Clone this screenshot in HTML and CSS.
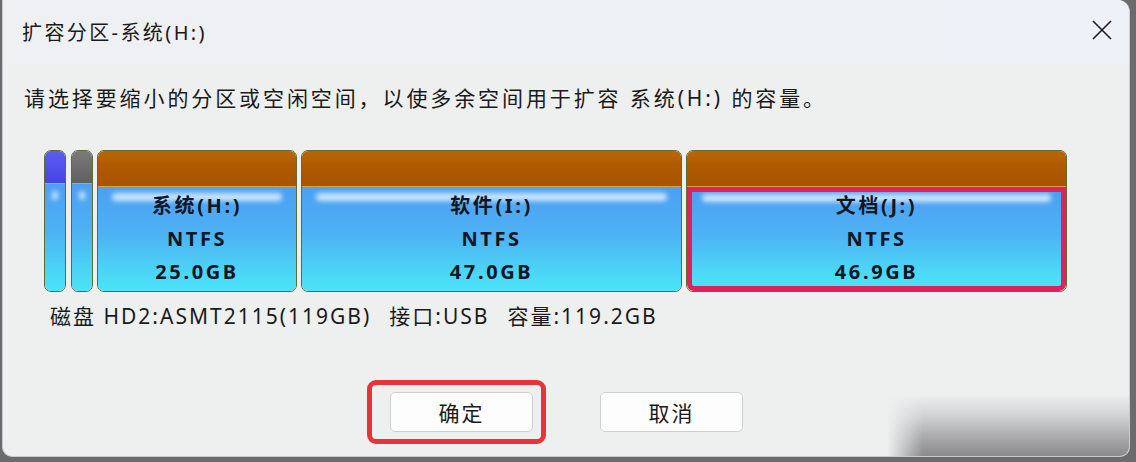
FILE: index.html
```html
<!DOCTYPE html>
<html lang="zh-CN">
<head>
    <meta charset="UTF-8">
    <meta name="viewport" content="width=device-width, initial-scale=1.0">
    <title>扩容分区-系统(H:)</title>
    <link rel="stylesheet" href="styles.css">
</head>
<body>
    <div class="dialog">
        <div class="titlebar">
            <div class="title">扩容分区-系统(H:)</div>
            <svg class="close" width="22" height="22" viewBox="0 0 22 22">
                <path d="M2 2 L20 20 M20 2 L2 20" stroke="#1c1c1c" stroke-width="1.6" fill="none"/>
            </svg>
        </div>
        <div class="hint">请选择要缩小的分区或空闲空间，以使多余空间用于扩容 系统(H:) 的容量。</div>
        <div class="disk">
            <div class="part small">
                <div class="cap cap-blue"></div>
                <div class="fill"><span class="shine"></span></div>
            </div>
            <div class="part small">
                <div class="cap cap-gray"></div>
                <div class="fill"><span class="shine"></span></div>
            </div>
            <div class="part sys">
                <div class="cap"></div>
                <div class="fill">
                    <span class="shine"></span>
                    <div class="label">系统(H:)</div>
                    <div class="label">NTFS</div>
                    <div class="label">25.0GB</div>
                </div>
            </div>
            <div class="part wide">
                <div class="cap"></div>
                <div class="fill">
                    <span class="shine"></span>
                    <div class="label">软件(I:)</div>
                    <div class="label">NTFS</div>
                    <div class="label">47.0GB</div>
                </div>
            </div>
            <div class="part wide selected">
                <div class="cap"></div>
                <div class="fill">
                    <span class="shine"></span>
                    <div class="label">文档(J:)</div>
                    <div class="label">NTFS</div>
                    <div class="label">46.9GB</div>
                </div>
            </div>
        </div>
        <div class="info">
            <span>磁盘 HD2:ASMT2115(119GB)</span>
            <span>接口:USB</span>
            <span>容量:119.2GB</span>
        </div>
        <div class="actions">
            <div class="mark">
                <button class="btn">确定</button>
            </div>
            <button class="btn">取消</button>
        </div>
        <div class="smudge"></div>
    </div>
</body>
</html>
```

FILE: styles.css
```css
body {
    margin: 0;
    background-color: #6b6b6d;
    font-family: "Noto Sans", "Noto Sans CJK SC", sans-serif;
    color: #1a1a1a;
    height: 462px;
    overflow: hidden;
}
.dialog {
    position: relative;
    margin: 0 6px 0 2px;
    height: 457px;
    background-color: #eef0f0;
    border: 1px solid #c9cbcc;
    border-top: none;
    border-radius: 0 12px 10px 10px;
    box-sizing: border-box;
    overflow: hidden;
}
.titlebar {
    display: flex;
    justify-content: space-between;
    align-items: center;
    height: 64px;
    padding: 0 16px 0 19px;
    background: linear-gradient(90deg, #eef0f2 0%, #eef2f8 100%);
}
.title {
    font-size: 20px;
    letter-spacing: 2.4px;
    margin-top: -2px;
}
.close {
    margin-top: -4px;
}
.hint {
    margin: 19px 0 0 21px;
    font-size: 21px;
    line-height: 30px;
    letter-spacing: 2.9px;
}
.disk {
    display: flex;
    gap: 4px;
    margin: 37px 0 0 41px;
    height: 142px;
}
.part {
    display: flex;
    flex-direction: column;
    border: 1px solid #5f6b34;
    border-radius: 7px;
    overflow: hidden;
    box-shadow: inset 0 0 0 1px #f1e6a0;
    box-sizing: border-box;
}
.small {
    width: 22px;
}
.small + .small {
    margin-left: 1px;
}
.sys {
    width: 200px;
}
.wide {
    width: 381px;
}
.cap {
    height: 35px;
    flex: none;
    background: linear-gradient(180deg, #bb6604 0%, #b05a00 40%, #a85400 100%);
    border-bottom: 1px solid #d9a24a;
}
.small .cap {
    height: 32px;
}
.cap-blue {
    background: linear-gradient(180deg, #5c5cf4 0%, #4444e2 100%);
    border-bottom-color: #9aa0ff;
}
.cap-gray {
    background: linear-gradient(180deg, #7a7a7a 0%, #606060 100%);
    border-bottom-color: #a8a8a8;
}
.fill {
    position: relative;
    flex: 1;
    min-height: 0;
    overflow: hidden;
    box-sizing: border-box;
    padding-top: 2px;
    background: linear-gradient(180deg, #4d9ff2 0%, #4db2f4 45%, #4cd8f6 85%, #4ae4f8 100%);
    text-align: center;
}
.shine {
    position: absolute;
    left: 14px;
    right: 14px;
    top: 6px;
    height: 8px;
    border-radius: 4px;
    background-color: rgba(235, 245, 255, 0.8);
    filter: blur(2.5px);
}
.small .shine {
    left: 7px;
    right: 7px;
    top: 7px;
    height: 9px;
}
.label {
    position: relative;
    font-weight: 700;
    font-size: 20px;
    line-height: 33px;
    letter-spacing: 2.6px;
    color: #0f1726;
}
.selected .fill {
    border: 5px solid #e0215f;
    border-radius: 0 0 7px 7px;
    padding-top: 0;
}
.selected .label {
    top: -3px;
}
.selected .shine {
    left: 10px;
    right: 10px;
    top: 2px;
}
.info {
    display: flex;
    gap: 18px;
    margin: 10px 0 0 47px;
    font-size: 21px;
    line-height: 28px;
    letter-spacing: 2px;
}
.actions {
    display: flex;
    align-items: center;
    gap: 54px;
    margin: 50px 0 0 364px;
}
.mark {
    padding: 7px 8px 7px 18px;
    border: 5px solid #e8333a;
    border-radius: 9px;
}
.btn {
    width: 143px;
    height: 40px;
    background-color: #fdfdfd;
    border: 1px solid #cfd0d2;
    border-radius: 5px;
    font-family: "Noto Sans CJK SC", sans-serif;
    font-size: 21px;
    letter-spacing: 2px;
    color: #1a1a1a;
    padding: 0;
}
.smudge {
    position: absolute;
    right: 0;
    bottom: 0;
    width: 242px;
    height: 60px;
    background:
        linear-gradient(90deg, #eef0f0 0, rgba(238, 240, 240, 0) 36px),
        linear-gradient(180deg, #eceeee 0%, #cfd0d2 35%, #a9a9ac 70%, #8a8a8d 100%);
}
```
